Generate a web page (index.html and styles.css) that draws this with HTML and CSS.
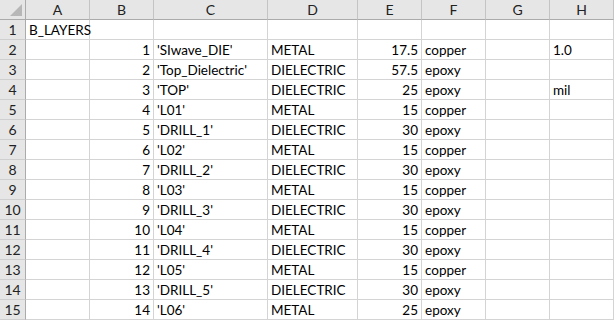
FILE: index.html
```html
<!DOCTYPE html>
<html>
<head>
<meta charset="utf-8">
<title>Sheet</title>
<link rel="stylesheet" href="styles.css">
</head>
<body>
<div class="sheet">
  <div class="corner"><svg width="25" height="19" viewBox="0 0 25 19"><polygon points="10,16 22,16 22,4" fill="#b7b7b7"/></svg></div>
  <div class="ch">A</div><div class="ch">B</div><div class="ch">C</div><div class="ch">D</div><div class="ch">E</div><div class="ch">F</div><div class="ch">G</div><div class="ch">H</div>

  <div class="rh">1</div><div class="c">B_LAYERS</div><div class="c"></div><div class="c"></div><div class="c"></div><div class="c"></div><div class="c"></div><div class="c"></div><div class="c"></div>
  <div class="rh">2</div><div class="c"></div><div class="c n">1</div><div class="c">'SIwave_DIE'</div><div class="c">METAL</div><div class="c n">17.5</div><div class="c">copper</div><div class="c"></div><div class="c">1.0</div>
  <div class="rh">3</div><div class="c"></div><div class="c n">2</div><div class="c">'Top_Dielectric'</div><div class="c">DIELECTRIC</div><div class="c n">57.5</div><div class="c">epoxy</div><div class="c"></div><div class="c"></div>
  <div class="rh">4</div><div class="c"></div><div class="c n">3</div><div class="c">'TOP'</div><div class="c">DIELECTRIC</div><div class="c n">25</div><div class="c">epoxy</div><div class="c"></div><div class="c">mil</div>
  <div class="rh">5</div><div class="c"></div><div class="c n">4</div><div class="c">'L01'</div><div class="c">METAL</div><div class="c n">15</div><div class="c">copper</div><div class="c"></div><div class="c"></div>
  <div class="rh">6</div><div class="c"></div><div class="c n">5</div><div class="c">'DRILL_1'</div><div class="c">DIELECTRIC</div><div class="c n">30</div><div class="c">epoxy</div><div class="c"></div><div class="c"></div>
  <div class="rh">7</div><div class="c"></div><div class="c n">6</div><div class="c">'L02'</div><div class="c">METAL</div><div class="c n">15</div><div class="c">copper</div><div class="c"></div><div class="c"></div>
  <div class="rh">8</div><div class="c"></div><div class="c n">7</div><div class="c">'DRILL_2'</div><div class="c">DIELECTRIC</div><div class="c n">30</div><div class="c">epoxy</div><div class="c"></div><div class="c"></div>
  <div class="rh">9</div><div class="c"></div><div class="c n">8</div><div class="c">'L03'</div><div class="c">METAL</div><div class="c n">15</div><div class="c">copper</div><div class="c"></div><div class="c"></div>
  <div class="rh">10</div><div class="c"></div><div class="c n">9</div><div class="c">'DRILL_3'</div><div class="c">DIELECTRIC</div><div class="c n">30</div><div class="c">epoxy</div><div class="c"></div><div class="c"></div>
  <div class="rh">11</div><div class="c"></div><div class="c n">10</div><div class="c">'L04'</div><div class="c">METAL</div><div class="c n">15</div><div class="c">copper</div><div class="c"></div><div class="c"></div>
  <div class="rh">12</div><div class="c"></div><div class="c n">11</div><div class="c">'DRILL_4'</div><div class="c">DIELECTRIC</div><div class="c n">30</div><div class="c">epoxy</div><div class="c"></div><div class="c"></div>
  <div class="rh">13</div><div class="c"></div><div class="c n">12</div><div class="c">'L05'</div><div class="c">METAL</div><div class="c n">15</div><div class="c">copper</div><div class="c"></div><div class="c"></div>
  <div class="rh">14</div><div class="c"></div><div class="c n">13</div><div class="c">'DRILL_5'</div><div class="c">DIELECTRIC</div><div class="c n">30</div><div class="c">epoxy</div><div class="c"></div><div class="c"></div>
  <div class="rh">15</div><div class="c"></div><div class="c n">14</div><div class="c">'L06'</div><div class="c">METAL</div><div class="c n">25</div><div class="c">epoxy</div><div class="c"></div><div class="c"></div>
</div>
</body>
</html>
```
FILE: styles.css
```css
html, body {
  margin: 0;
  padding: 0;
  background: #ffffff;
}

.sheet {
  display: grid;
  grid-template-columns: 26px 64px 64px 114px 90px 64px 64px 64px 64px;
  grid-auto-rows: 20px;
  width: 614px;
  font-family: Lato, "Liberation Sans", sans-serif;
  font-size: 13.5px;
  color: #000000;
}

.sheet > div {
  box-sizing: border-box;
  line-height: 19px;
  white-space: nowrap;
}

.corner {
  background: #e6e6e6;
  border-right: 1px solid #ababab;
  border-bottom: 1px solid #ababab;
}

.corner svg {
  display: block;
}

.ch {
  background: #e6e6e6;
  border-right: 1px solid #c4c4c4;
  border-bottom: 1px solid #ababab;
  text-align: center;
  color: #222222;
  font-size: 14px;
}

.rh {
  background: #e6e6e6;
  border-right: 1px solid #ababab;
  border-bottom: 1px solid #cfcfcf;
  text-align: center;
  color: #222222;
  font-size: 14px;
}

.c {
  border-right: 1px solid #d4d4d4;
  border-bottom: 1px solid #d4d4d4;
  padding: 1px 3px 0;
  line-height: 18px;
}

.n {
  text-align: right;
}
```
